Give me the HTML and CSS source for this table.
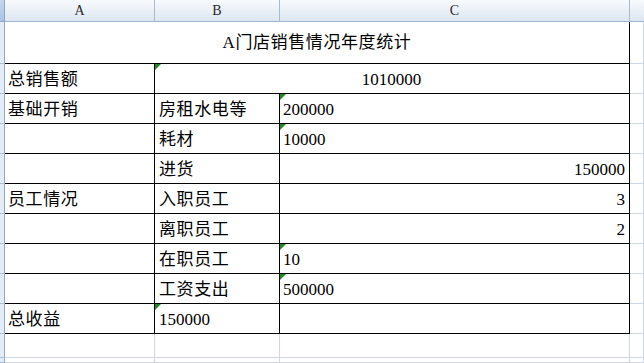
FILE: index.html
```html
<!DOCTYPE html>
<html lang="zh">
<head>
<meta charset="utf-8">
<title>A门店销售情况年度统计</title>
<link rel="stylesheet" href="styles.css">
</head>
<body>
<div class="sheet">
  <!-- column header row -->
  <div class="corner"></div>
  <div class="colhdr">A</div>
  <div class="colhdr">B</div>
  <div class="colhdr">C</div>
  <div class="colhdr last"></div>

  <!-- row 1 -->
  <div class="rowhdr"></div>
  <div class="cell t title zh">A门店销售情况年度统计</div>
  <div class="cell g"></div>

  <!-- row 2 -->
  <div class="rowhdr"></div>
  <div class="cell t zh">总销售额</div>
  <div class="cell t merge center flag">1010000</div>
  <div class="cell g"></div>

  <!-- row 3 -->
  <div class="rowhdr"></div>
  <div class="cell t zh">基础开销</div>
  <div class="cell t zh b">房租水电等</div>
  <div class="cell t flag">200000</div>
  <div class="cell g"></div>

  <!-- row 4 -->
  <div class="rowhdr"></div>
  <div class="cell t"></div>
  <div class="cell t zh b">耗材</div>
  <div class="cell t flag">10000</div>
  <div class="cell g"></div>

  <!-- row 5 -->
  <div class="rowhdr"></div>
  <div class="cell t"></div>
  <div class="cell t zh b">进货</div>
  <div class="cell t right">150000</div>
  <div class="cell g"></div>

  <!-- row 6 -->
  <div class="rowhdr"></div>
  <div class="cell t zh">员工情况</div>
  <div class="cell t zh b">入职员工</div>
  <div class="cell t right">3</div>
  <div class="cell g"></div>

  <!-- row 7 -->
  <div class="rowhdr"></div>
  <div class="cell t"></div>
  <div class="cell t zh b">离职员工</div>
  <div class="cell t right">2</div>
  <div class="cell g"></div>

  <!-- row 8 -->
  <div class="rowhdr"></div>
  <div class="cell t"></div>
  <div class="cell t zh b">在职员工</div>
  <div class="cell t flag">10</div>
  <div class="cell g"></div>

  <!-- row 9 -->
  <div class="rowhdr"></div>
  <div class="cell t"></div>
  <div class="cell t zh b">工资支出</div>
  <div class="cell t flag">500000</div>
  <div class="cell g"></div>

  <!-- row 10 -->
  <div class="rowhdr"></div>
  <div class="cell t zh">总收益</div>
  <div class="cell t flag b">150000</div>
  <div class="cell t"></div>
  <div class="cell g"></div>

  <!-- row 11 -->
  <div class="rowhdr"></div>
  <div class="cell g"></div>
  <div class="cell g"></div>
  <div class="cell g"></div>
  <div class="cell g"></div>

  <!-- row 12 -->
  <div class="rowhdr"></div>
  <div class="cell g"></div>
  <div class="cell g"></div>
  <div class="cell g"></div>
  <div class="cell g"></div>
</div>
</body>
</html>
```

FILE: styles.css
```css
html, body {
  margin: 0;
  padding: 0;
  background: #ffffff;
  overflow: hidden;
}

.sheet {
  width: 644px;
  height: 363px;
  display: grid;
  grid-template-columns: 5px 150px 125px 350px 1fr;
  grid-template-rows: 22px 42px repeat(9, 30px) 24px 1fr;
  font-family: "Liberation Serif", "Noto Sans CJK SC", serif;
  font-size: 17px;
  color: #000;
}

.sheet > div {
  box-sizing: border-box;
  min-width: 0;
  overflow: visible;
}

.corner {
  background: linear-gradient(#c4d6ee, #a9c3e6);
  border-right: 1px solid #8aa6c8;
  border-bottom: 1px solid #8aa6c8;
}

.colhdr {
  background: linear-gradient(#f8fafd, #dde6f1);
  border-right: 1px solid #a9bacd;
  border-bottom: 1px solid #9eb6ce;
  font-family: "Liberation Serif", serif;
  font-size: 14px;
  color: #2a2a2a;
  display: flex;
  align-items: center;
  justify-content: center;
  line-height: 1;
  padding-top: 1px;
}

.colhdr.last {
  border-right: none;
}

.rowhdr {
  background: #e4ecf7;
  border-right: 1px solid #8fa9c9;
  border-bottom: 1px solid #a9bfdc;
}

.cell {
  position: relative;
  display: flex;
  align-items: flex-end;
  justify-content: flex-start;
  padding: 0 4px 3px 3px;
  line-height: 20px;
  white-space: nowrap;
}

.cell.t {
  border-right: 1px solid #000;
  border-bottom: 1px solid #000;
}

.cell.g {
  border-right: 1px solid #d0d7e5;
  border-bottom: 1px solid #d0d7e5;
}

.cell.zh {
  letter-spacing: 0.6px;
}

.cell.b {
  padding-left: 4px;
}

.cell.title {
  grid-column: 2 / 5;
  justify-content: center;
  align-items: center;
  padding: 1px 0 0 0;
}

.cell.merge {
  grid-column: 3 / 5;
}

.cell.center {
  justify-content: center;
}

.cell.right {
  justify-content: flex-end;
}

.cell.flag::before {
  content: "";
  position: absolute;
  left: 0;
  top: 0;
  width: 0;
  height: 0;
  border-top: 6px solid #1f8a1f;
  border-right: 6px solid transparent;
}
```
